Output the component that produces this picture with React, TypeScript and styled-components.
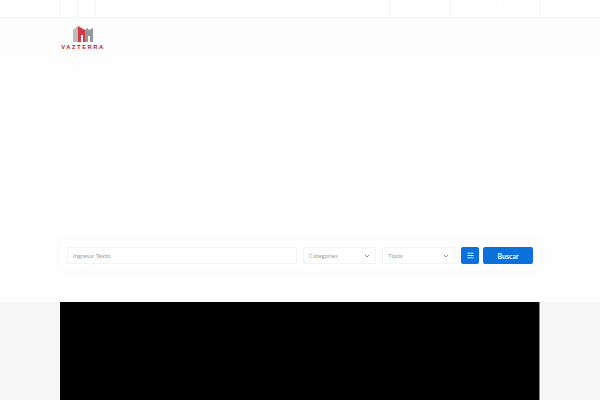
import { createGlobalStyle } from 'styled-components';
import styled from 'styled-components';

const GlobalStyle = createGlobalStyle`
  html, body {
    margin: 0;
    padding: 0;
    background: #ffffff;
  }
  body {
    font-family: 'Lato', 'Open Sans', sans-serif;
    overflow: hidden;
  }
`;

const Container = styled.div`
  width: 480px;
  margin: 0 auto;
  display: flex;
`;

const TopBar = styled.div`
  height: 17px;
  background: #fefefe;
  border-bottom: 1px solid #f5f5f5;
`;

const TopCell = styled.div<{ $width: number }>`
  width: ${(p) => p.$width}px;
  height: 17px;
  box-sizing: border-box;
  border-left: 1px solid #f4f4f4;
  display: flex;
  align-items: flex-start;
  justify-content: center;
`;

const TopIcon = styled.svg`
  width: 10px;
  height: 13px;
  margin-left: 10px;
  display: block;
`;

const Header = styled.div`
  height: 39px;
  background: #fdfdfd;
`;

const HeaderRow = styled(Container)`
  height: 39px;
  align-items: center;
  justify-content: space-between;
`;

const Logo = styled.div`
  width: 45px;
  display: flex;
  flex-direction: column;
  align-items: center;
`;

const LogoMark = styled.svg`
  width: 22px;
  height: 16px;
  display: block;
  margin-bottom: 2px;
`;

const LogoText = styled.span`
  font-family: 'Liberation Sans', sans-serif;
  font-size: 5.8px;
  line-height: 6px;
  font-weight: 700;
  letter-spacing: 1.55px;
  margin-right: -1px;
  color: #a9272d;
  white-space: nowrap;
`;

const Nav = styled.nav`
  display: flex;
  margin-right: 12px;
  margin-top: -3px;
`;

const NavItem = styled.a<{ $gap: number }>`
  margin-left: ${(p) => p.$gap}px;
  font-size: 6.5px;
  font-weight: 700;
  color: #ffffff;
  white-space: nowrap;
`;

const Hero = styled.div`
  height: 245px;
  background: #fefefe;
  box-sizing: border-box;
  padding-top: 183px;
`;

const SearchCard = styled.form`
  width: 480px;
  height: 31px;
  margin: 0 auto;
  box-sizing: border-box;
  padding: 7px 7px;
  background: #ffffff;
  border-radius: 2px;
  box-shadow: 0 0 8px rgba(0, 0, 0, 0.03);
  display: flex;
  align-items: center;
`;

const Field = styled.div<{ $width: number; $gap: number }>`
  width: ${(p) => p.$width}px;
  margin-right: ${(p) => p.$gap}px;
  height: 17px;
  box-sizing: border-box;
  border: 1px solid #f4f4f4;
  border-radius: 2px;
  background: #ffffff;
  padding: 0 5px;
  display: flex;
  align-items: center;
  justify-content: space-between;
  font-size: 6.1px;
  color: #a0a0a0;
`;

const Chevron = styled.svg`
  width: 6px;
  height: 6px;
  display: block;
`;

const IconButton = styled.button`
  width: 18px;
  height: 17px;
  margin-right: 4px;
  padding: 0;
  border: 0;
  border-radius: 2px;
  background: #0b6fdc;
  display: flex;
  align-items: center;
  justify-content: center;
`;

const SearchButton = styled.button`
  width: 50px;
  height: 17px;
  padding: 0;
  border: 0;
  border-radius: 2px;
  background: #0b6fdc;
  color: #ffffff;
  font-family: inherit;
  font-size: 7px;
  font-weight: 700;
`;

const Section = styled.div`
  height: 98px;
  background: #f6f6f6;
`;

const Video = styled.div`
  width: 480px;
  height: 98px;
  margin: 0 auto;
  box-sizing: border-box;
  background: #000000;
  border-right: 1px solid #8a8a8a;
`;

const ChevronDown = () => (
  <Chevron viewBox="0 0 6 6">
    <path d="M1 2l2 2 2-2" fill="none" stroke="#888" strokeWidth="0.9" />
  </Chevron>
);

const App = () => {
  return (
    <>
      <GlobalStyle />
      <TopBar>
        <Container>
          <TopCell $width={17} />
          <TopCell $width={18} />
          <TopCell $width={294} />
          <TopCell $width={61}>
            <span />
          </TopCell>
          <TopCell $width={89}>
            <TopIcon viewBox="0 0 10 13">
              <circle cx="5" cy="3.5" r="2.5" fill="#fff" />
              <path d="M0 12c0-3 2-4.5 5-4.5s5 1.5 5 4.5z" fill="#fff" />
            </TopIcon>
          </TopCell>
          <TopCell $width={1} />
        </Container>
      </TopBar>
      <Header>
        <HeaderRow>
          <Logo>
            <LogoMark viewBox="0 0 22 16">
              <path d="M1 4l5-4v16H1z" fill="#bcbcbe" />
              <path d="M6 0l7 4v12h-2V9H9v7H6z" fill="#d33a41" />
              <path d="M13 4l2-2 2 2 4-2v14h-3v-6h-2v6h-3z" fill="#94979b" />
            </LogoMark>
            <LogoText>VAZTERRA</LogoText>
          </Logo>
          <Nav>
            <NavItem $gap={0}>Inicio</NavItem>
            <NavItem $gap={16}>Ver</NavItem>
            <NavItem $gap={39}>Propiedades</NavItem>
            <NavItem $gap={32}>Blog</NavItem>
            <NavItem $gap={39}>Contacto</NavItem>
          </Nav>
        </HeaderRow>
      </Header>
      <Hero>
        <SearchCard>
          <Field $width={230} $gap={6}>Ingresar Texto</Field>
          <Field $width={73} $gap={6}>
            Categories
            <ChevronDown />
          </Field>
          <Field $width={73} $gap={6}>
            Tipos
            <ChevronDown />
          </Field>
          <IconButton type="button" aria-label="Filtros">
            <svg width="7" height="7" viewBox="0 0 7 7">
              <path d="M0.500 1.200h6M0.500 3.500h6M0.500 5.800h6" stroke="#fff" strokeWidth="0.9" />
            </svg>
          </IconButton>
          <SearchButton type="button">Buscar</SearchButton>
        </SearchCard>
      </Hero>
      <Section>
        <Video />
      </Section>
    </>
  );
};

export default App;
